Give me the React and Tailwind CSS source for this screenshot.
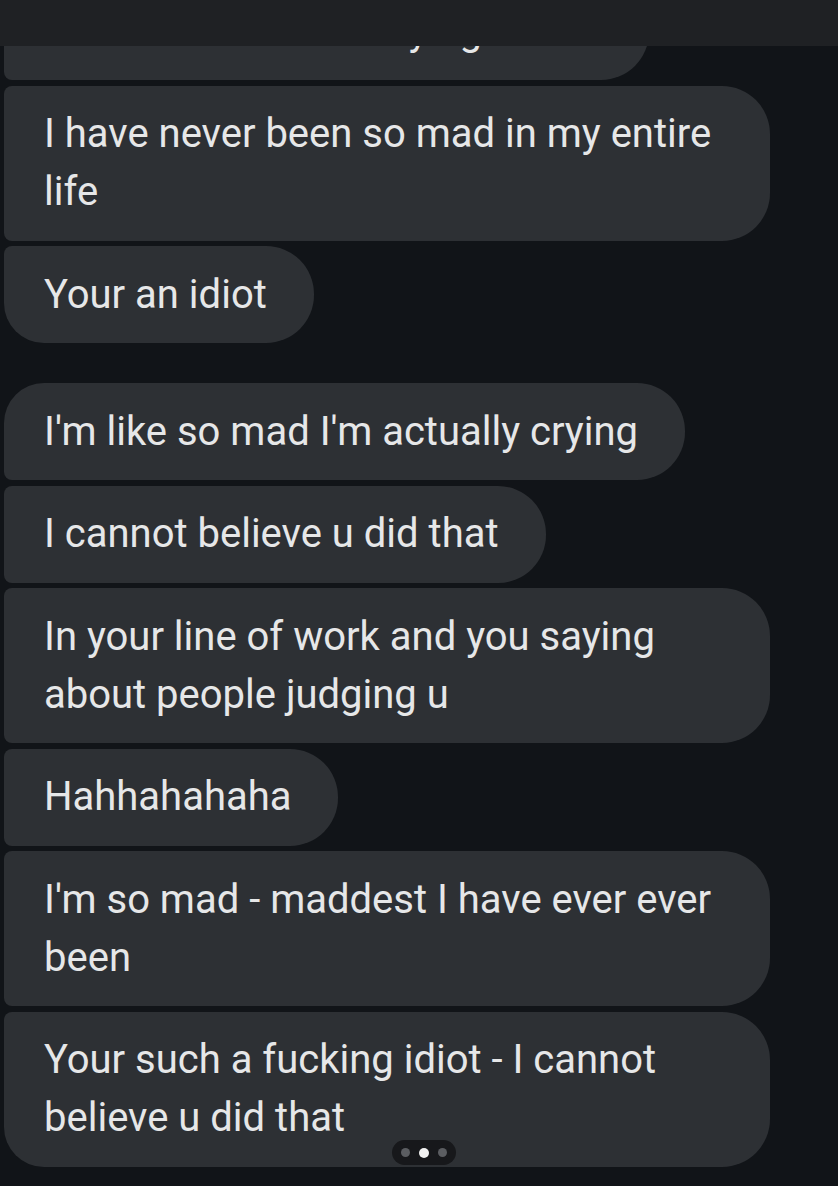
import React from "react";

const font = { fontFamily: "Roboto, 'Noto Sans', sans-serif" };

function Bubble({ children, wide, tl = "rounded-tl-[8px]", bl = "rounded-bl-[8px]" }) {
  return (
    <div
      className={`${wide ? "w-[766px]" : "w-fit"} bg-[#2d3034] text-[#e6e7e8] text-[40px] leading-[58px] py-[19.5px] pl-[40px] pr-[47px] rounded-r-[48px] ${tl} ${bl}`}
    >
      {children}
    </div>
  );
}

export default function App() {
  return (
    <div className="relative w-[838px] h-[1186px] overflow-hidden bg-[#111418]" style={font}>
      <div className="flex flex-col gap-[40px] pl-[4px] mt-[-17px]">
        <div className="flex flex-col gap-[5.5px]">
          <Bubble>I am so mad she's crying lol too</Bubble>
          <Bubble wide>
            I have never been so mad in my entire
            <br />
            life
          </Bubble>
          <Bubble bl="rounded-bl-[40px]">Your an idiot</Bubble>
        </div>
        <div className="flex flex-col gap-[5.5px]">
          <Bubble tl="rounded-tl-[40px]">I'm like so mad I'm actually crying</Bubble>
          <Bubble>I cannot believe u did that</Bubble>
          <Bubble wide>
            In your line of work and you saying
            <br />
            about people judging u
          </Bubble>
          <Bubble>Hahhahahaha</Bubble>
          <Bubble wide>
            I'm so mad - maddest I have ever ever
            <br />
            been
          </Bubble>
          <Bubble wide bl="rounded-bl-[40px]">
            Your such a fucking idiot - I cannot
            <br />
            believe u did that
          </Bubble>
        </div>
      </div>

      <div className="absolute top-0 left-0 right-0 h-[46px] bg-[#1f2124]" />

      <div className="absolute left-[392px] top-[1140px] w-[64px] h-[25px] rounded-full bg-[#17181b] flex items-center justify-center gap-[9px]">
        <span className="w-[9px] h-[9px] rounded-full bg-[#5b5d61]" />
        <span className="w-[10px] h-[10px] rounded-full bg-[#f2f2f2]" />
        <span className="w-[9px] h-[9px] rounded-full bg-[#5b5d61]" />
      </div>
    </div>
  );
}
